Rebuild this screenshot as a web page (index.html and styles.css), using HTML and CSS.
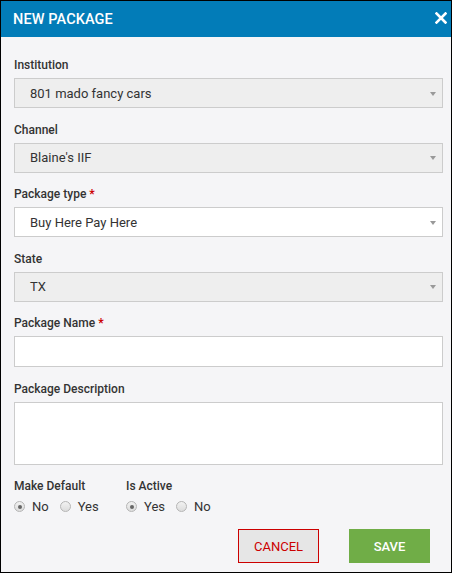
FILE: index.html
```html
<!DOCTYPE html>
<html>
<head>
<meta charset="utf-8">
<link rel="stylesheet" href="styles.css">
</head>
<body>
<div class="modal">
  <div class="modal-header">
    <span class="modal-title">NEW PACKAGE</span>
    <span class="close" aria-label="Close">
      <svg width="12" height="12" viewBox="0 0 12 12"><path d="M1.5 1.5 L10.5 10.5 M10.5 1.5 L1.5 10.5" stroke="#fff" stroke-width="2.6" stroke-linecap="square"/></svg>
    </span>
  </div>
  <div class="modal-body">
    <div class="field">
      <div class="label">Institution</div>
      <div class="select disabled"><span>801 mado fancy cars</span><i class="caret"></i></div>
    </div>
    <div class="field">
      <div class="label">Channel</div>
      <div class="select disabled"><span>Blaine's IIF</span><i class="caret"></i></div>
    </div>
    <div class="field">
      <div class="label">Package type <span class="req">*</span></div>
      <div class="select"><span>Buy Here Pay Here</span><i class="caret"></i></div>
    </div>
    <div class="field">
      <div class="label">State</div>
      <div class="select disabled"><span>TX</span><i class="caret"></i></div>
    </div>
    <div class="field">
      <div class="label">Package Name <span class="req">*</span></div>
      <input class="input" type="text">
    </div>
    <div class="field">
      <div class="label">Package Description</div>
      <textarea class="textarea"></textarea>
    </div>
    <div class="toggles">
      <div class="toggle-group first">
        <div class="label">Make Default</div>
        <div class="radios">
          <span class="radio checked"></span><span class="rtext">No</span>
          <span class="radio"></span><span class="rtext">Yes</span>
        </div>
      </div>
      <div class="toggle-group">
        <div class="label">Is Active</div>
        <div class="radios">
          <span class="radio checked"></span><span class="rtext">Yes</span>
          <span class="radio"></span><span class="rtext">No</span>
        </div>
      </div>
    </div>
    <div class="actions">
      <button class="btn btn-cancel">CANCEL</button>
      <button class="btn btn-save">SAVE</button>
    </div>
  </div>
</div>
</body>
</html>
```
FILE: styles.css
```css
* { box-sizing: border-box; }
html, body { margin: 0; padding: 0; }
body {
  font-family: Roboto, "Liberation Sans", Arial, sans-serif;
  color: #333;
  background: #f5f5f7;
}
.modal {
  width: 452px;
  height: 573px;
  border: 1px solid #000;
  background: #f5f5f7;
  display: flex;
  flex-direction: column;
}
.modal-header {
  height: 36px;
  background: #027cb8;
  display: flex;
  align-items: center;
  justify-content: space-between;
  padding: 0 4px 0 12px;
}
.modal-title {
  color: #fff;
  font-size: 14.5px;
  font-weight: 500;
  letter-spacing: 0.1px;
  margin-top: 1px;
}
.close {
  width: 12px;
  height: 12px;
  display: flex;
  margin-top: -2px;
}
.modal-body {
  padding: 20px 8px 0 13px;
  display: flex;
  flex-direction: column;
}
.field { margin-bottom: 13.5px; }
.label {
  font-size: 12px;
  font-weight: 500;
  line-height: 16px;
  color: #333;
  margin-bottom: 5px;
}
.req { color: #cc0000; font-weight: 700; }
.select {
  height: 30px;
  border: 1px solid #cccccc;
  background: #fff;
  display: flex;
  align-items: center;
  justify-content: space-between;
  padding: 0 6px 0 15px;
  font-size: 13px;
  color: #333;
}
.select.disabled { background: #eeeeee; }
.caret {
  width: 0;
  height: 0;
  border-left: 3.5px solid transparent;
  border-right: 3.5px solid transparent;
  border-top: 4px solid #999;
  margin-top: 1px;
}
.input, .textarea {
  display: block;
  width: 100%;
  border: 1px solid #cccccc;
  background: #fff;
  margin: 0;
  padding: 0;
  font: inherit;
  outline: none;
}
.input { height: 31px; }
.textarea { height: 63px; resize: none; }
.toggles {
  display: flex;
  margin-top: -0.5px;
}
.toggle-group.first { width: 112px; }
.toggle-group .label { margin-bottom: 5px; }
.radios {
  display: flex;
  align-items: center;
  height: 16px;
  font-size: 13px;
  color: #333;
}
.radio {
  width: 11px;
  height: 11px;
  border-radius: 50%;
  border: 1px solid #b5b5b5;
  background: linear-gradient(#f2f2f2, #dcdcdc);
  position: relative;
  margin-right: 7px;
  flex: none;
}
.radio.checked::after {
  content: "";
  position: absolute;
  left: 2.5px;
  top: 2.5px;
  width: 4px;
  height: 4px;
  border-radius: 50%;
  background: #666;
}
.rtext { margin-right: 11px; }
.actions {
  display: flex;
  justify-content: flex-end;
  gap: 30px;
  margin-top: 14.5px;
  padding-right: 13px;
}
.btn {
  width: 81px;
  height: 34px;
  font-family: Roboto, "Liberation Sans", Arial, sans-serif;
  font-size: 13px;
  padding: 0;
  cursor: pointer;
}
.btn-cancel {
  background: #e6e6e6;
  border: 1px solid #cc0000;
  color: #cc0000;
}
.btn-save {
  background: #70ad47;
  border: 1px solid #70ad47;
  color: #fff;
  font-weight: 500;
}
```
